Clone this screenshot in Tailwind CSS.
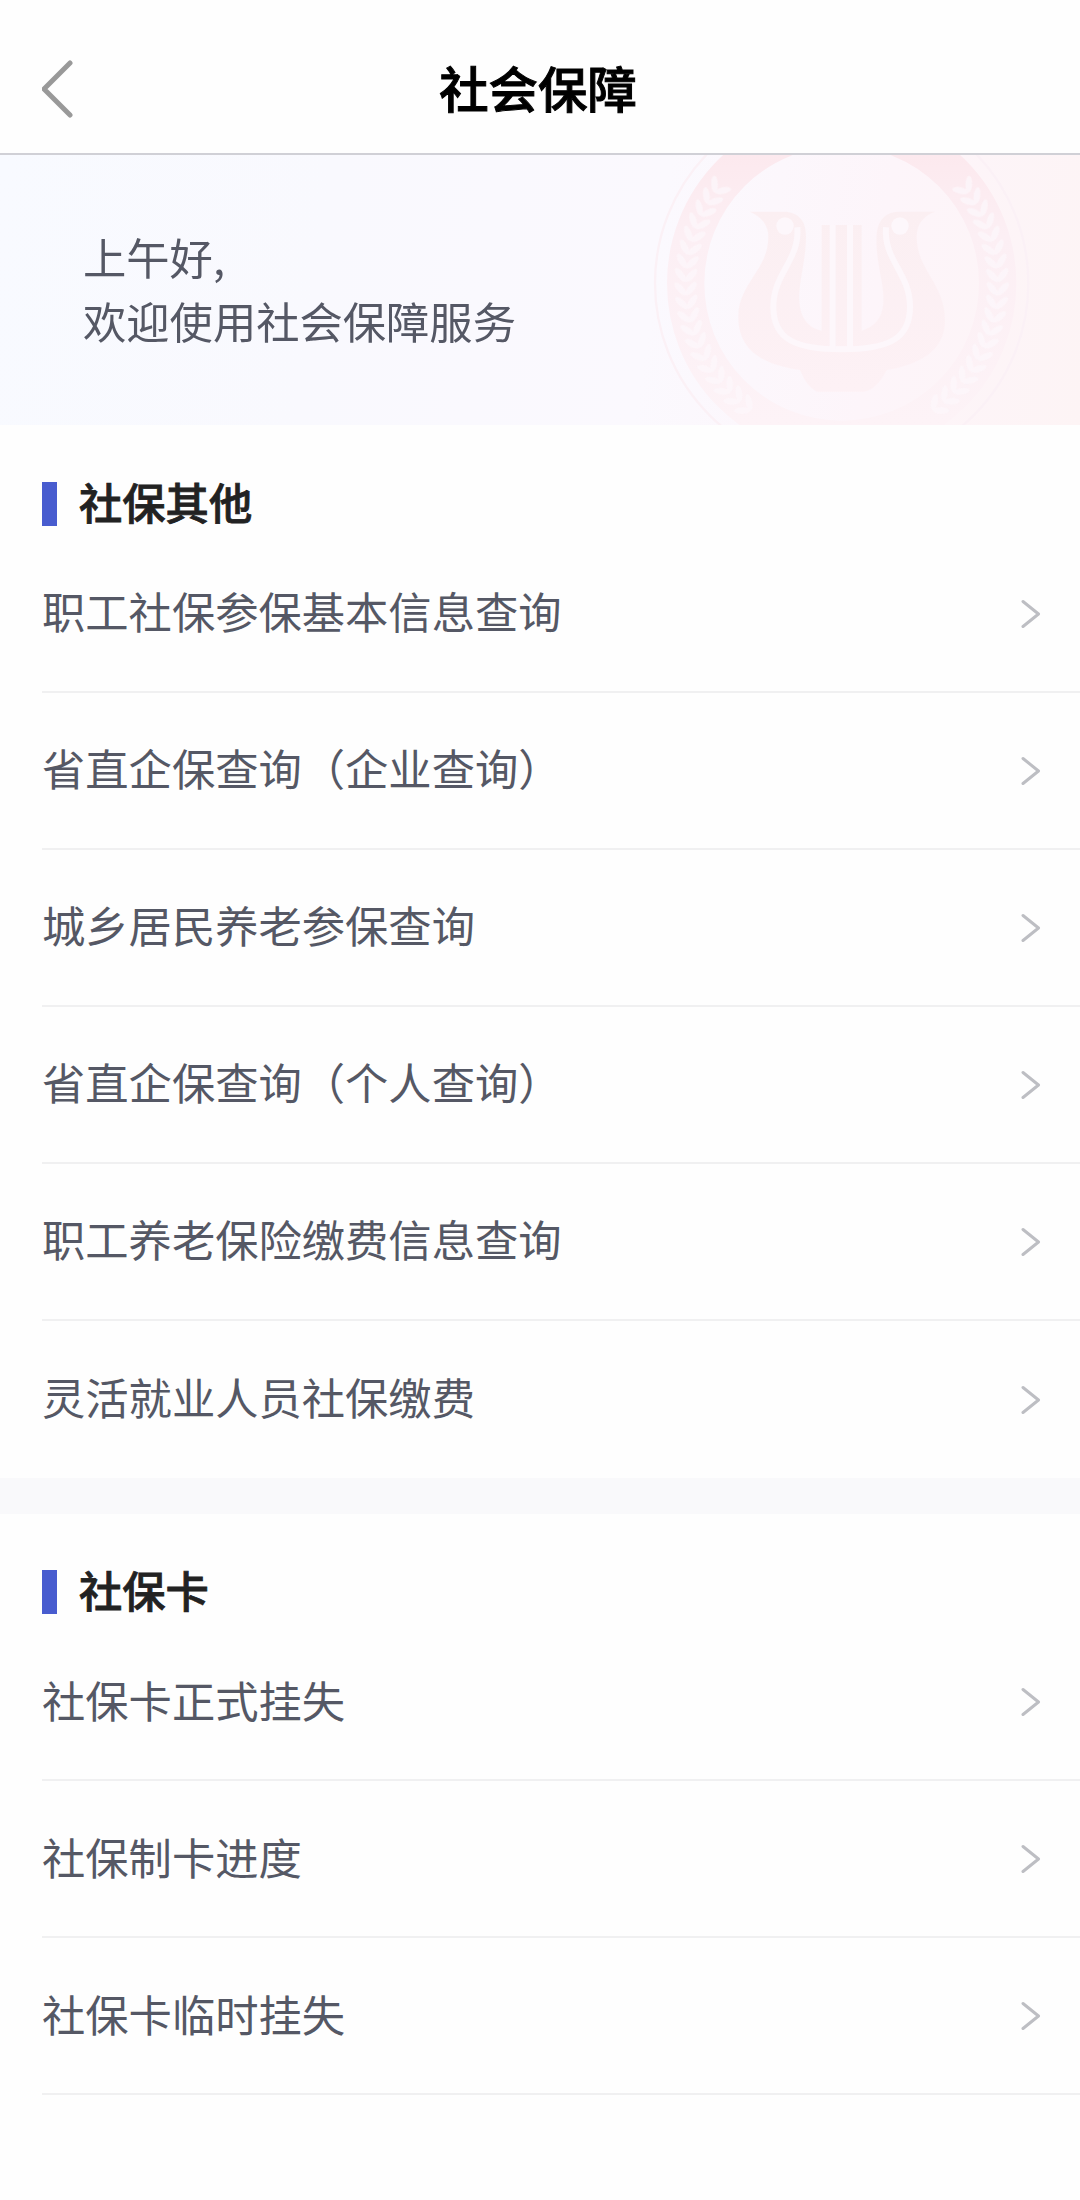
<!DOCTYPE html>
<html lang="zh-CN">
<head>
  <meta charset="UTF-8" />
  <meta name="viewport" content="width=device-width, initial-scale=1.0"/>
  <title>社会保障</title>
  <script src="https://cdn.jsdelivr.net/npm/@tailwindcss/browser@4"></script>
</head>
<body class="bg-[#fefefe] font-['Noto_Sans_CJK_SC',sans-serif] text-[43.3px] text-[#555865] min-h-screen overflow-x-hidden">

  <!-- Header -->
  <header class="h-[155px] border-b-2 border-[#d0d0d6] grid grid-cols-[120px_1fr_124px] items-center pt-[24px]">
    <button class="pl-[42px]" aria-label="返回">
      <svg class="w-8 h-[60px]" viewBox="0 0 32 60" fill="none" stroke="#999" stroke-width="5" stroke-linecap="round" stroke-linejoin="round">
        <path d="M28 4 2 30l26 26"/>
      </svg>
    </button>
    <h1 class="text-[49.4px] leading-[60px] font-medium [-webkit-text-stroke:1px_black] text-black text-center pb-1">社会保障</h1>
  </header>

  <!-- Banner -->
  <section class="relative h-[270px] bg-[linear-gradient(98deg,#f8faff_0%,#f9f9fe_30%,#fbf9fe_60%,#fdf5fa_80%,#fdf4f5_100%)] overflow-hidden">
    <svg class="absolute right-0 top-0 w-[440px] h-[270px]" viewBox="0 45 1320 810" fill="none">
      <defs>
        <linearGradient id="ring" x1="0" y1="45" x2="0" y2="855" gradientUnits="userSpaceOnUse">
          <stop offset="0" stop-color="#fce9ee"/>
          <stop offset=".3" stop-color="#fceff4"/>
          <stop offset="1" stop-color="#fdf3f7"/>
        </linearGradient>
        <linearGradient id="lyre" x1="0" y1="215" x2="0" y2="755" gradientUnits="userSpaceOnUse">
          <stop offset="0" stop-color="#fbeff2"/>
          <stop offset="1" stop-color="#fdf1f5"/>
        </linearGradient>
      </defs>
      <circle cx="605" cy="430" r="560" stroke="#fbf1f6" stroke-width="7"/>
      <circle cx="605" cy="430" r="468" stroke="url(#ring)" stroke-width="112"/>
      <g id="wreath" fill="#fdf7fb" opacity=".75"></g>
      <path fill="url(#lyre)" d="M330 215H440Q498 222 498 290C498 370 470 440 480 500Q490 560 545 572V255H665V572Q725 555 730 490C735 430 705 370 710 280Q718 215 780 215H885Q830 235 830 290C830 390 915 430 915 540C915 620 860 670 740 690Q710 750 670 755H530Q500 740 480 690C350 670 295 620 295 530C295 430 385 390 385 290Q385 240 330 215Z"/>
      <g stroke="#fdf7fb" stroke-width="18">
        <path d="M472 262C480 360 400 400 400 500S470 628 605 628S810 600 810 500S730 360 738 262"/>
        <path d="M578 255V628M630 255V628"/>
      </g>
      <circle cx="435" cy="258" r="26" fill="#fdf7fb"/>
      <circle cx="780" cy="258" r="26" fill="#fdf7fb"/>
    </svg>
    <p class="relative pt-[69px] pl-[83px] leading-16">上午好,<br>欢迎使用社会保障服务</p>
  </section>

  <svg class="hidden">
    <symbol id="arrow" viewBox="0 0 20 30">
      <path d="M2 2.500 17.500 15 2 27.500" fill="none" stroke="#bdbec3" stroke-width="3" stroke-linecap="round" stroke-linejoin="round"/>
    </symbol>
  </svg>

  <!-- 社保其他 -->
  <section class="pl-[42px]">
    <h2 class="h-[111px] pt-[57px] flex gap-[22px] font-medium [-webkit-text-stroke:0.8px_#222] text-[#222]">
      <span class="w-[15px] h-11 bg-[#485ccf]"></span>
      <span class="leading-[38px]">社保其他</span>
    </h2>
    <ul class="leading-[60px] divide-y-2 divide-[#f0f0f1]">
      <li class="h-[157px] pr-[39px] flex items-center justify-between"><span class="pb-[7px]">职工社保参保基本信息查询</span><svg class="w-5 h-[30px]"><use href="#arrow"/></svg></li>
      <li class="h-[157px] pr-[39px] flex items-center justify-between"><span class="pb-[7px]">省直企保查询（企业查询）</span><svg class="w-5 h-[30px]"><use href="#arrow"/></svg></li>
      <li class="h-[157px] pr-[39px] flex items-center justify-between"><span class="pb-[7px]">城乡居民养老参保查询</span><svg class="w-5 h-[30px]"><use href="#arrow"/></svg></li>
      <li class="h-[157px] pr-[39px] flex items-center justify-between"><span class="pb-[7px]">省直企保查询（个人查询）</span><svg class="w-5 h-[30px]"><use href="#arrow"/></svg></li>
      <li class="h-[157px] pr-[39px] flex items-center justify-between"><span class="pb-[7px]">职工养老保险缴费信息查询</span><svg class="w-5 h-[30px]"><use href="#arrow"/></svg></li>
      <li class="h-[157px] pr-[39px] flex items-center justify-between"><span class="pb-[7px]">灵活就业人员社保缴费</span><svg class="w-5 h-[30px]"><use href="#arrow"/></svg></li>
    </ul>
  </section>

  <div class="h-9 bg-[#f9f9fb]"></div>

  <!-- 社保卡 -->
  <section class="pl-[42px]">
    <h2 class="h-[110px] pt-[56px] flex gap-[22px] font-medium [-webkit-text-stroke:0.8px_#222] text-[#222]">
      <span class="w-[15px] h-11 bg-[#485ccf]"></span>
      <span class="leading-[38px]">社保卡</span>
    </h2>
    <ul class="leading-[60px]">
      <li class="h-[157px] pr-[39px] border-b-2 border-[#f0f0f1] flex items-center justify-between"><span class="pb-[5px]">社保卡正式挂失</span><svg class="w-5 h-[30px]"><use href="#arrow"/></svg></li>
      <li class="h-[157px] pr-[39px] border-b-2 border-[#f0f0f1] flex items-center justify-between"><span class="pb-[5px]">社保制卡进度</span><svg class="w-5 h-[30px]"><use href="#arrow"/></svg></li>
      <li class="h-[157px] pr-[39px] border-b-2 border-[#f0f0f1] flex items-center justify-between"><span class="pb-[5px]">社保卡临时挂失</span><svg class="w-5 h-[30px]"><use href="#arrow"/></svg></li>
    </ul>
  </section>

  <script>
    // hojas de la corona, a ambos lados del emblema
    let leaves = '';
    for (let a = -38; a <= 52; a += 5) {
      for (const side of [1, -1]) {
        leaves += `<g transform="translate(605 430) scale(${side} 1) rotate(${a})">
          <ellipse cx="452" cy="0" rx="25" ry="10" transform="rotate(50 452 0)"/>
          <ellipse cx="484" cy="0" rx="25" ry="10" transform="rotate(-50 484 0)"/>
        </g>`;
      }
    }
    document.getElementById('wreath').innerHTML = leaves;
  </script>
</body>
</html>
